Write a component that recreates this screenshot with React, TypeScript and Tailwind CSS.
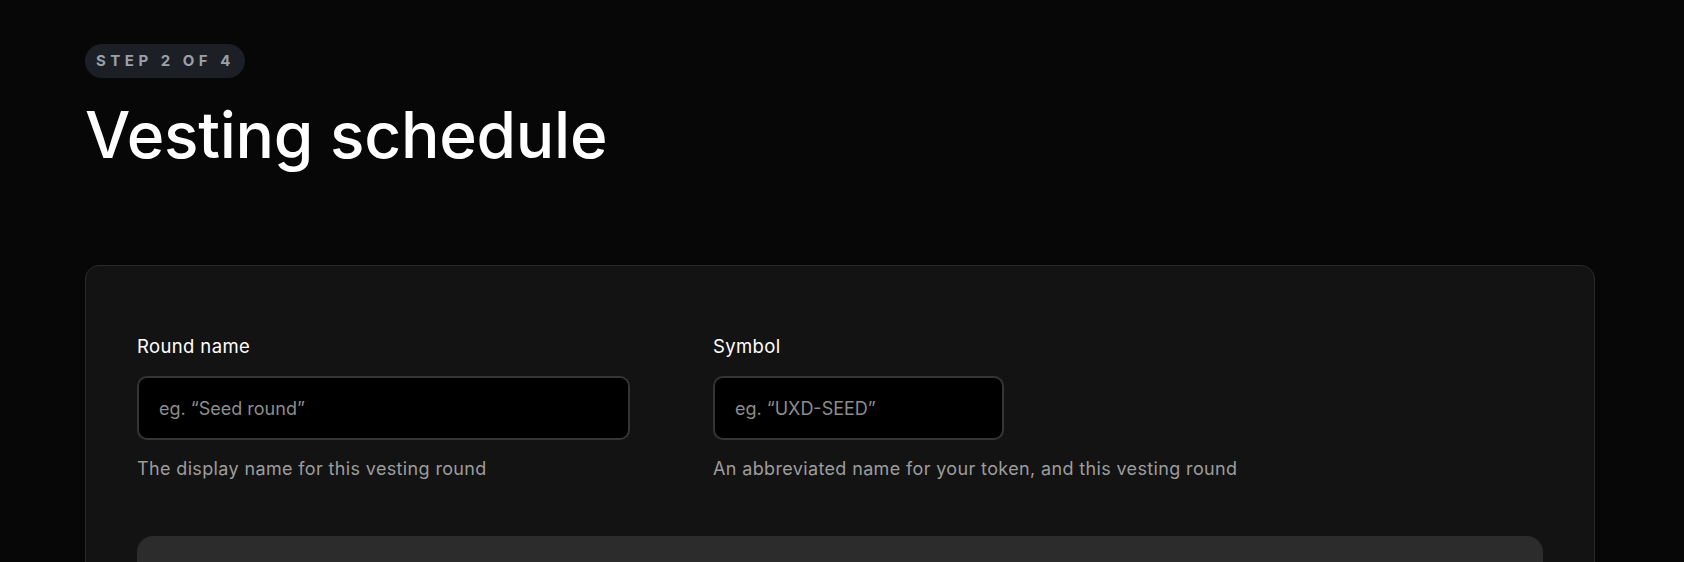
import React from 'react';

interface FieldProps {
    label: string;
    placeholder: string;
    hint: string;
    inputWidth: string;
}

function Field({ label, placeholder, hint, inputWidth }: FieldProps) {
    return (
        <div className="flex flex-col">
            <label className="text-[18.5px] leading-7 font-normal tracking-[0.02em] text-white">
                {label}
            </label>
            <input
                type="text"
                placeholder={placeholder}
                className={`mt-4 h-16 ${inputWidth} rounded-[10px] border-2 border-[#353535] bg-black px-5 text-[18px] text-white placeholder:text-[#8c8c8c] outline-none`}
            />
            <p className="mt-[15px] text-[18px] leading-7 tracking-[0.02em] text-[#9d9d9d]">
                {hint}
            </p>
        </div>
    );
}

export default function App() {
    return (
        <div
            className="min-h-screen bg-[#070707] px-[85px] pt-[44px] pb-20"
            style={{ fontFamily: 'Inter, "Noto Sans", sans-serif' }}
        >
            <span className="inline-flex h-[34px] items-center rounded-full bg-[#1c1f26] pl-[11px] pr-[10px] text-[15px] font-bold tracking-[0.3em] text-[#9ba0a8]">
                STEP 2 OF 4
            </span>
            <h1 className="mt-[25px] text-[64px] leading-none font-medium tracking-[-0.004em] text-white">
                Vesting schedule
            </h1>

            <div className="mt-[98px] w-[1510px] rounded-[14px] border border-[#2a2a2a] bg-[#131313] px-[51px] pt-[66px] pb-10">
                <div className="flex gap-[83px]">
                    <Field
                        label="Round name"
                        placeholder="eg. “Seed round”"
                        hint="The display name for this vesting round"
                        inputWidth="w-[493px]"
                    />
                    <Field
                        label="Symbol"
                        placeholder="eg. “UXD-SEED”"
                        hint="An abbreviated name for your token, and this vesting round"
                        inputWidth="w-[291px]"
                    />
                </div>
                <div className="mt-[53px] h-[240px] rounded-2xl bg-[#2c2c2c]" />
            </div>
        </div>
    );
}
